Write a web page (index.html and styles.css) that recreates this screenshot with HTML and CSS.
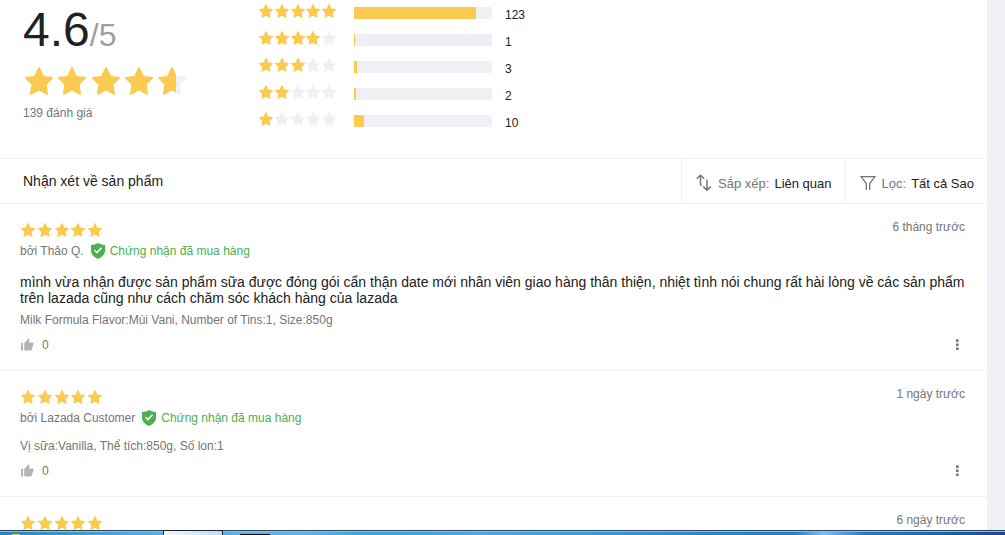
FILE: index.html
```
<!DOCTYPE html>
<html lang="vi">
<head>
  <meta charset="UTF-8" />
  <meta name="viewport" content="width=device-width, initial-scale=1.0"/>
  <title>Nhận xét về sản phẩm</title>
  <link rel="stylesheet" href="styles.css">
</head>
<body>
  <!-- Shared icons -->
  <svg class="sprite" aria-hidden="true">
    <linearGradient id="part-fill">
      <stop offset="0.66" stop-color="#faca51"/>
      <stop offset="0.66" stop-color="#eff0f5"/>
    </linearGradient>
    <symbol id="star" viewBox="0 0 28 28">
      <path d="M13.200.6q.8-1.200 1.600 0l4 8.400 8.600 1.100q1.100.4.3 1.500l-6.100 6.200 1.500 9.200q-.1 1.200-1.300.7L14 23.600l-7.800 4.100q-1.200.5-1.300-.7l1.500-9.200-6.100-6.200q-.8-1.100.3-1.500L9.200 9z"/>
    </symbol>
    <symbol id="shield" viewBox="0 0 14 16">
      <path fill="#4caf50" d="M7 0c2 1.300 4.400 2 7 2v5.500c0 3.900-2.900 6.600-7 8.500-4.100-1.900-7-4.600-7-8.500V2c2.600 0 5-.7 7-2z"/>
      <path fill="none" stroke="#fff" stroke-width="1.500" d="M3.600 7.300l2.300 2.300 4.600-4.800"/>
    </symbol>
    <symbol id="like" viewBox="0 0 14 14">
      <path fill="#b4b4b4" d="M1 5h2v7.500H1zM4.200 5.300L8.400.5q1.300.2 1.200 1.500L9 4.400h3.400q1.400.1 1.200 1.500l-1.800 5.700q-.4.900-1.400.9H5.400q-1.200 0-1.200-1.200z"/>
    </symbol>
    <symbol id="dots" viewBox="0 0 4 12">
      <path fill="#757575" d="M1 .3h2.600v2.600H1zM1 4.400h2.600V7H1zM1 8.500h2.600v2.600H1z"/>
    </symbol>
  </svg>

  <main class="page">
    <section class="summary">
      <div class="score">
        <p class="score-value">4.6<span>/5</span></p>
        <div class="stars stars-big" data-on="4" data-part="1"></div>
        <p class="score-count">139 đánh giá</p>
      </div>
      <ul class="bars" id="bars"></ul>
    </section>

    <header class="toolbar">
      <h2>Nhận xét về sản phẩm</h2>
      <button type="button" class="tool">
        <svg width="16" height="18" viewBox="0 0 16 18" fill="none" stroke="#757575" stroke-width="1.500"><path d="M4.500 10.500V1.500M.7 4.700l3.800-3.500 3.800 3.500M11 5.500V16M7.200 12.600l3.800 3.700 3.800-3.700M4.500 10.200q0 1.300 1.300 1.300"/></svg>
        <span>Sắp xếp:</span> <b>Liên quan</b>
      </button>
      <button type="button" class="tool">
        <svg width="16" height="18" viewBox="0 0 16 18" fill="none" stroke="#757575" stroke-width="1.300"><path d="M6.300 16V9.500L1 2.600h14L9.700 9.500V16"/></svg>
        <span>Lọc:</span> <b>Tất cả Sao</b>
      </button>
    </header>

    <article class="review">
      <div class="review-top">
        <div class="stars" data-on="5"></div>
        <time>6 tháng trước</time>
      </div>
      <div class="meta">
        <span>bởi Thảo Q.</span>
        <svg width="14" height="16"><use href="#shield"/></svg>
        <span class="verified">Chứng nhận đã mua hàng</span>
      </div>
      <p class="content">mình vừa nhận được sản phẩm sữa được đóng gói cẩn thận date mới nhân viên giao hàng thân thiện, nhiệt tình nói chung rất hài lòng về các sản phẩm trên lazada cũng như cách chăm sóc khách hàng của lazada</p>
      <p class="sku">Milk Formula Flavor:Mùi Vani, Number of Tins:1, Size:850g</p>
      <div class="actions">
        <button type="button" class="like"><svg width="14" height="14"><use href="#like"/></svg>0</button>
        <button type="button" class="more" aria-label="Thêm"><svg width="4" height="12"><use href="#dots"/></svg></button>
      </div>
    </article>

    <article class="review">
      <div class="review-top">
        <div class="stars" data-on="5"></div>
        <time>1 ngày trước</time>
      </div>
      <div class="meta">
        <span>bởi Lazada Customer</span>
        <svg width="14" height="16"><use href="#shield"/></svg>
        <span class="verified">Chứng nhận đã mua hàng</span>
      </div>
      <p class="sku">Vị sữa:Vanilla, Thể tích:850g, Số lon:1</p>
      <div class="actions">
        <button type="button" class="like"><svg width="14" height="14"><use href="#like"/></svg>0</button>
        <button type="button" class="more" aria-label="Thêm"><svg width="4" height="12"><use href="#dots"/></svg></button>
      </div>
    </article>

    <article class="review">
      <div class="review-top">
        <div class="stars" data-on="5"></div>
        <time>6 ngày trước</time>
      </div>
    </article>
  </main>

  <!-- Taskbar -->
  <div class="taskbar">
    <span class="task-start"></span>
    <span class="task-window"></span>
    <span class="task-icon"></span>
  </div>

  <script src="script.js"></script>
</body>
</html>
```
FILE: styles.css
```
* {
  margin: 0;
  padding: 0;
  box-sizing: border-box;
}

body {
  height: 100vh;
  overflow: hidden;
  padding-right: 18px;
  background-color: #eff0f5;
  color: #212121;
  font-family: "Liberation Sans", Arial, sans-serif;
  font-size: 12px;
  line-height: 16px;
}

button {
  border: 0;
  background: none;
  color: inherit;
  font: inherit;
  cursor: pointer;
}

svg {
  display: block;
  flex: none;
}

.sprite {
  position: absolute;
  width: 0;
  height: 0;
}

.page {
  min-height: 100vh;
  background-color: #fff;
}

/* Stars */
.stars {
  display: flex;
  justify-content: space-between;
  width: 81px;
}

.stars svg {
  width: 14px;
  height: 14px;
  fill: #eff0f5;
}

.stars .on {
  fill: #faca51;
}

.stars .part {
  fill: url(#part-fill);
}

.stars-big {
  width: 161px;
  margin: 8px 0 10px 2px;
}

.stars-big svg {
  width: 28px;
  height: 28px;
}

/* Rating summary */
.summary {
  display: flex;
  height: 158px;
  padding: 0 23px;
}

.score {
  width: 236px;
  padding-top: 6px;
}

.score-value {
  height: 53px;
  font-size: 48px;
  line-height: 48px;
}

.score-value span {
  font-size: 32px;
  color: #9e9e9e;
}

.score-count {
  color: #757575;
}

.bars {
  list-style: none;
}

.bars li {
  display: flex;
  align-items: center;
  height: 27px;
  padding-bottom: 1px;
}

.bars .stars {
  width: 77px;
  padding-bottom: 4px;
  box-sizing: content-box;
}

.bar {
  width: 138px;
  height: 12px;
  margin: 0 13px 0 18px;
  background-color: #eff0f5;
}

.bar div {
  height: 100%;
  background-color: #faca51;
}

.bar-count {
  padding-top: 4px;
}

/* Sort and filter */
.toolbar {
  display: flex;
  height: 46px;
  border-top: 1px solid #eff0f5;
  border-bottom: 1px solid #eff0f5;
}

.toolbar h2 {
  flex: 1;
  padding-left: 23px;
  font-size: 14px;
  font-weight: normal;
  line-height: 44px;
}

.tool {
  display: flex;
  align-items: center;
  gap: 5px;
  padding: 5px 13px 0 14px;
  border-left: 1px solid #eff0f5;
  font-size: 13px;
}

.tool svg {
  margin: 0 1px 2px 0;
}

.tool span {
  color: #757575;
}

.tool b {
  font-weight: normal;
}

/* Reviews */
.review {
  padding: 16px 22px 16px 20px;
  border-bottom: 1px solid #eff0f5;
  color: #757575;
}

.review-top {
  display: flex;
  justify-content: space-between;
  height: 20px;
}

.review-top .stars {
  align-items: center;
  margin-left: 1px;
}

.review-top time {
  line-height: 14px;
}

.meta {
  display: flex;
  align-items: center;
  height: 18px;
  margin-top: 2px;
}

.meta svg {
  margin: 0 5px 0 7px;
}

.verified {
  color: #4caf50;
}

.content {
  margin-top: 14px;
  font-size: 14px;
  color: #212121;
}

.sku {
  margin-top: 6px;
}

.meta + .sku {
  margin-top: 11px;
}

.actions {
  display: flex;
  justify-content: space-between;
  height: 18px;
  margin-top: 8px;
}

.like {
  display: flex;
  align-items: center;
  gap: 8px;
}

.more {
  padding: 0 6px;
}

/* Taskbar */
.taskbar {
  position: fixed;
  left: 0;
  right: 0;
  bottom: 0;
  display: flex;
  align-items: flex-end;
  height: 5px;
  border-top: 1px solid #24425c;
  background: linear-gradient(to right, #2583bd, #55aad8 14%, #65b2df 30%, #3ca0d2 37%, #50a7dc 48%, #2c86c8 70%, #297bc0 79%, #83bdec 82%, #2b77bc 86%, #1e62a5 94%, #174882);
  box-shadow: inset 0 1px #8ec4e4;
}

.task-start {
  width: 8px;
  height: 1px;
  margin-left: 12px;
  background-color: #d8dc3c;
}

.task-window {
  width: 60px;
  height: 5px;
  margin-left: 143px;
  border: 1px solid #16242e;
  border-bottom: 0;
  border-radius: 2px 2px 0 0;
  background: linear-gradient(to right, #f3f9fc, #b9dcf1);
}

.task-icon {
  width: 30px;
  height: 1px;
  margin-left: 17px;
  background-color: #000;
}
```
FILE: script.js
```
const total = 139;
const ratings = [
  { stars: 5, count: 123 },
  { stars: 4, count: 1 },
  { stars: 3, count: 3 },
  { stars: 2, count: 2 },
  { stars: 1, count: 10 }
];

// Rating bars
const bars = document.getElementById('bars');

ratings.forEach(({ stars, count }) => {
  const row = document.createElement('li');
  row.innerHTML = `
    <div class="stars" data-on="${stars}"></div>
    <div class="bar"><div style="width: ${count / total * 100}%"></div></div>
    <span class="bar-count">${count}</span>`;
  bars.appendChild(row);
});

// Fill every star row
document.querySelectorAll('.stars').forEach((el) => {
  const on = Number(el.dataset.on);
  for (let i = 0; i < 5; i++) {
    let state = i < on ? 'on' : 'off';
    if (i === on && el.dataset.part) state = 'part';
    el.innerHTML += `<svg class="${state}"><use href="#star"/></svg>`;
  }
});
```
